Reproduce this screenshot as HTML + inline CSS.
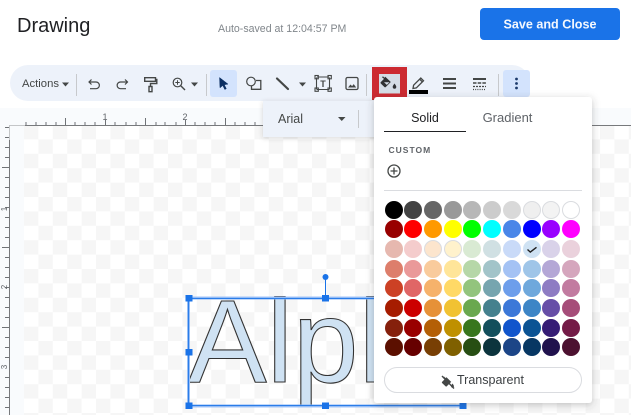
<!DOCTYPE html>
<html><head><meta charset="utf-8"><style>
html,body{margin:0;padding:0;background:#fff}
body{width:631px;height:415px;overflow:hidden;position:relative;font-family:"Liberation Sans",sans-serif}
.a{position:absolute}
</style></head><body>
<svg class="a" style="left:0;top:0" width="631" height="415" viewBox="0 0 631 415">
<defs>
<pattern id="chk" x="24" y="125" width="28.8" height="28.8" patternUnits="userSpaceOnUse">
<rect width="28.8" height="28.8" fill="#fff"/>
<rect width="14.4" height="14.4" fill="#f6f6f6"/>
<rect x="14.4" y="14.4" width="14.4" height="14.4" fill="#f6f6f6"/>
</pattern>
<filter id="sh" x="-15%" y="-15%" width="130%" height="130%"><feDropShadow dx="0" dy="2" stdDeviation="4" flood-color="#3c4043" flood-opacity=".3"/></filter>
<filter id="sh2" x="-15%" y="-30%" width="130%" height="160%"><feDropShadow dx="0" dy="1" stdDeviation="2.5" flood-color="#3c4043" flood-opacity=".22"/></filter>
</defs>

<!-- header -->
<text x="17" y="32" font-size="20" fill="#202124">Drawing</text>
<text x="218" y="32" font-size="10.6" fill="#80868b">Auto-saved at 12:04:57 PM</text>
<rect x="480" y="8" width="140" height="32" rx="4" fill="#1a73e8"/>
<text x="550" y="28.5" font-size="13" font-weight="bold" fill="#f4f8fe" text-anchor="middle" textLength="93" lengthAdjust="spacingAndGlyphs">Save and Close</text>

<!-- canvas -->
<rect x="0" y="108" width="631" height="307" fill="#f9fbfd"/>
<rect x="24" y="125" width="607" height="290" fill="url(#chk)"/>

<!-- rulers -->
<path d="M9 125.5H631M9.5 125V415" stroke="#77797c" stroke-width="1" fill="none"/>
<path d="M9 125.5H25M9.5 125V140" stroke="#c4c6c8" stroke-width="1" fill="none"/>
<g stroke="#6f7276" stroke-width="1" fill="none">
<path d="M26 125V122M36 125V122M46 125V122M56 125V122M75 125V122M85 125V122M95 125V122M115 125V122M126 125V122M136 125V122M156 125V122M165 125V122M176 125V122M195 125V122M205 125V122M215 125V122M235 125V122M245 125V122M255 125V122"/>
<path d="M65.500 125V118M145.500 125V118M225.500 125V118M105.500 125V120M185.500 125V120"/>
<path d="M5 127.500H9M5 137.500H9M5 147.500H9M5 157.500H9M2 167.500H9M5 177.500H9M5 187.500H9M5 197.500H9M5 207.500H9M5 217.500H9M5 227.500H9M5 237.500H9M2 247.500H9M5 257.500H9M5 267.500H9M5 277.500H9M5 287.500H9M5 297.500H9M5 307.500H9M5 317.500H9M2 327.500H9M5 337.500H9M5 347.500H9M5 357.500H9M5 377.500H9M5 387.500H9M5 397.500H9M5 407.500H9"/>
</g>
<text x="105" y="120" font-size="9" fill="#5f6368" text-anchor="middle">1</text>
<text x="185" y="120" font-size="9" fill="#5f6368" text-anchor="middle">2</text>
<text x="4" y="212" font-size="8" fill="#5f6368" text-anchor="middle" transform="rotate(-90 4 209)">1</text>
<text x="4" y="290" font-size="8" fill="#5f6368" text-anchor="middle" transform="rotate(-90 4 287)">2</text>
<text x="4" y="370" font-size="8" fill="#5f6368" text-anchor="middle" transform="rotate(-90 4 367)">3</text>

<!-- word art -->
<text x="188" y="382" font-size="118" fill="#cfe2f3" stroke="#333" stroke-width="1.100">Alph</text>

<!-- selection -->
<path d="M188.500 298H463M188.500 298V406M188.500 406H463" fill="none" stroke="#a4c6f8" stroke-width="3"/>
<path d="M188 298.500H463M188 405.500H463M188.500 298V406" stroke="#2a7de9" stroke-width="1.200" fill="none"/>
<path d="M325.500 277V298" stroke="#1a73e8" stroke-width="1"/>
<circle cx="325.500" cy="277" r="3" fill="#1a73e8"/>
<g fill="#1a73e8">
<rect x="185.500" y="295" width="7" height="6.500"/><rect x="322" y="295" width="7" height="6.500"/>
<rect x="185.500" y="349" width="7" height="6.500"/><rect x="185.500" y="402.500" width="7" height="6.500"/>
<rect x="322" y="402.500" width="7" height="6.500"/><rect x="459.500" y="402.500" width="7" height="6.500"/>
</g>

<!-- toolbar -->
<rect x="10" y="65" width="520" height="36" rx="18" fill="#edf2fa"/>
<text x="22" y="87" font-size="11" fill="#444746" textLength="37" lengthAdjust="spacingAndGlyphs">Actions</text>
<path d="M62 82.500h7l-3.500 4z" fill="#444746"/>
<path d="M76.500 74V96M206.500 74V96M366.500 74V96" stroke="#c7c9cc"/>
<!-- undo -->
<path d="M91.500 79.500l-2.500 2.500 2.500 2.500M89 82h7a3.300 3.300 0 0 1 0 6.700H90" fill="none" stroke="#444746" stroke-width="1.200"/>
<!-- redo -->
<path d="M125 79.500l2.500 2.500-2.500 2.500M127.500 82h-7a3.300 3.300 0 0 0 0 6.700H126" fill="none" stroke="#444746" stroke-width="1.200"/>
<!-- paint format -->
<path d="M144.700 77.700h10.800v3.600h-10.800zM155.500 79.500h1.300v4h-6.300v3M149 86.500h3v5.200h-3z" fill="none" stroke="#444746" stroke-width="1.400"/>
<!-- zoom -->
<circle cx="177.500" cy="82.500" r="4.300" fill="none" stroke="#444746" stroke-width="1.200"/>
<path d="M180.500 85.500l4.500 4.500" stroke="#444746" stroke-width="1.400"/>
<path d="M175.300 82.500h4.400M177.500 80.300v4.400" stroke="#444746" stroke-width="1"/>
<path d="M191 82.500h7l-3.500 4z" fill="#444746"/>
<!-- select -->
<rect x="210" y="70" width="27" height="27" rx="3" fill="#d3e3fd"/>
<path d="M219.500 77.500l8.500 6.600-3.700.6 2 4-1.500.8-2-4-2.800 2.300z" fill="#0b2f63" stroke="#0b2f63" stroke-width=".5"/>
<!-- shape -->
<circle cx="251" cy="81.500" r="4.300" fill="none" stroke="#444746" stroke-width="1.200"/>
<path d="M256 80.500h4.800v8.800h-9.300v-3.300" fill="none" stroke="#444746" stroke-width="1.300"/>
<!-- line -->
<path d="M277 78.500l11 10.500" stroke="#444746" stroke-width="2.200" stroke-linecap="round"/>
<path d="M299 82.500h7l-3.500 4z" fill="#444746"/>
<!-- textbox -->
<g fill="none" stroke="#444746" stroke-width="1.100">
<path d="M317 77h12M317 89.500h12M316.500 77.500v12M329.500 77.500v12"/>
<rect x="315" y="75.500" width="3.300" height="3.300"/><rect x="328" y="75.500" width="3.300" height="3.300"/>
<rect x="315" y="88" width="3.300" height="3.300"/><rect x="328" y="88" width="3.300" height="3.300"/>
</g>
<text x="323" y="87" font-size="9" font-weight="bold" fill="#444746" text-anchor="middle">T</text>
<!-- image -->
<rect x="346" y="77.500" width="12" height="12" rx="1.500" fill="none" stroke="#444746" stroke-width="1.300"/>
<path d="M348 87.500l2.500-3 1.600 1.600 1.600-2 2.500 3.400z" fill="#444746"/>

<!-- fill highlighted -->
<rect x="372" y="67" width="35" height="33" fill="#cc2a31"/>
<rect x="379" y="74" width="21" height="19.500" fill="#d5dde6"/>
<path d="M383 76.200l-1 1 2 1.700-3.200 3.200a1 1 0 0 0 0 1.400l3.600 3.500a1 1 0 0 0 1.400 0l5-5-5.500-5.300-1 1z" fill="#2f3133"/>
<path d="M384 82.200h5.500l-2.700 2.700z" fill="#d5dde6"/>
<path d="M394.500 83.500c-1 1.400-1.800 2.500-1.800 3.400a1.800 1.800 0 0 0 3.600 0c0-.9-.8-2-1.800-3.400z" fill="#2f3133"/>
<!-- pen -->
<path d="M413 88.500l.6-3.300 7.200-7.200 2.700 2.700-7.200 7.200z" fill="none" stroke="#444746" stroke-width="1.300"/>
<path d="M419.500 79l3 3" stroke="#444746" stroke-width="1.300"/>
<rect x="409" y="90" width="19" height="4" fill="#000"/>
<!-- line weight -->
<path d="M443 79h13M443 83.500h13M443 88h13" stroke="#444746" stroke-width="2"/>
<!-- dash -->
<path d="M473 79h13" stroke="#444746" stroke-width="2"/>
<path d="M473 83h13" stroke="#444746" stroke-width="1.500" stroke-dasharray="3.500 1.200"/>
<path d="M473 86.500h13" stroke="#444746" stroke-width="1.300" stroke-dasharray="2 1"/>
<path d="M473 89.500h13" stroke="#444746" stroke-width="1.200" stroke-dasharray="1 1.200"/>
<path d="M498.500 74V96" stroke="#c7c9cc"/>
<!-- more -->
<rect x="503" y="70" width="27" height="27" rx="3" fill="#d3e3fd"/>
<circle cx="516.500" cy="79" r="1.400" fill="#1c3a6b"/><circle cx="516.500" cy="83.500" r="1.400" fill="#1c3a6b"/><circle cx="516.500" cy="88" r="1.400" fill="#1c3a6b"/>

<!-- font panel -->
<rect x="263" y="101" width="115" height="36" fill="#edf2fa" filter="url(#sh2)"/>
<text x="278" y="123" font-size="12.500" fill="#444746">Arial</text>
<path d="M338 117h7.500l-3.750 4z" fill="#444746"/>
<path d="M358.500 110V128" stroke="#c7c9cc"/>

<!-- popup -->
<rect x="374" y="97" width="218" height="306" rx="3" fill="#fff" filter="url(#sh)"/>
<text x="425" y="122" font-size="12.500" fill="#202124" text-anchor="middle">Solid</text>
<text x="507.500" y="122" font-size="13" fill="#5f6368" text-anchor="middle">Gradient</text>
<rect x="384" y="131" width="82" height="1" fill="#202124"/>
<text x="388.500" y="153" font-size="8.500" font-weight="bold" fill="#5f6368" letter-spacing="1">CUSTOM</text>
<circle cx="394" cy="171" r="6" fill="none" stroke="#444746" stroke-width="1.300"/>
<path d="M394 167.500v7M390.500 171h7" stroke="#444746" stroke-width="1.300"/>
<rect x="384" y="190" width="198" height="1" fill="#dadce0"/>

<!-- swatches -->
<g stroke="none">
<g><circle cx="394" cy="210" r="9" fill="#000"/><circle cx="413" cy="210" r="9" fill="#434343"/><circle cx="433" cy="210" r="9" fill="#666"/><circle cx="453" cy="210" r="9" fill="#999"/><circle cx="472" cy="210" r="9" fill="#b7b7b7"/><circle cx="492" cy="210" r="9" fill="#ccc"/><circle cx="512" cy="210" r="9" fill="#d9d9d9"/><circle cx="532" cy="210" r="8.500" fill="#efefef" stroke="#dadce0"/><circle cx="551" cy="210" r="8.500" fill="#f3f3f3" stroke="#dadce0"/><circle cx="571" cy="210" r="8.500" fill="#fff" stroke="#dadce0"/></g>
<g><circle cx="394" cy="229" r="9" fill="#980000"/><circle cx="413" cy="229" r="9" fill="#f00"/><circle cx="433" cy="229" r="9" fill="#f90"/><circle cx="453" cy="229" r="9" fill="#ff0"/><circle cx="472" cy="229" r="9" fill="#0f0"/><circle cx="492" cy="229" r="9" fill="#0ff"/><circle cx="512" cy="229" r="9" fill="#4a86e8"/><circle cx="532" cy="229" r="9" fill="#00f"/><circle cx="551" cy="229" r="9" fill="#90f"/><circle cx="571" cy="229" r="9" fill="#f0f"/></g>
<g><circle cx="394" cy="249" r="9" fill="#e6b8af"/><circle cx="413" cy="249" r="9" fill="#f4cccc"/><circle cx="433" cy="249" r="8.500" fill="#fce5cd" stroke="#dadce0"/><circle cx="453" cy="249" r="8.500" fill="#fff2cc" stroke="#dadce0"/><circle cx="472" cy="249" r="9" fill="#d9ead3"/><circle cx="492" cy="249" r="9" fill="#d0e0e3"/><circle cx="512" cy="249" r="9" fill="#c9daf8"/><circle cx="532" cy="249" r="9" fill="#cfe2f3"/><circle cx="551" cy="249" r="9" fill="#d9d2e9"/><circle cx="571" cy="249" r="9" fill="#ead1dc"/></g>
<g><circle cx="394" cy="269" r="9" fill="#dd7e6b"/><circle cx="413" cy="269" r="9" fill="#ea9999"/><circle cx="433" cy="269" r="9" fill="#f9cb9c"/><circle cx="453" cy="269" r="9" fill="#ffe599"/><circle cx="472" cy="269" r="9" fill="#b6d7a8"/><circle cx="492" cy="269" r="9" fill="#a2c4c9"/><circle cx="512" cy="269" r="9" fill="#a4c2f4"/><circle cx="532" cy="269" r="9" fill="#9fc5e8"/><circle cx="551" cy="269" r="9" fill="#b4a7d6"/><circle cx="571" cy="269" r="9" fill="#d5a6bd"/></g>
<g><circle cx="394" cy="288" r="9" fill="#cc4125"/><circle cx="413" cy="288" r="9" fill="#e06666"/><circle cx="433" cy="288" r="9" fill="#f6b26b"/><circle cx="453" cy="288" r="9" fill="#ffd966"/><circle cx="472" cy="288" r="9" fill="#93c47d"/><circle cx="492" cy="288" r="9" fill="#76a5af"/><circle cx="512" cy="288" r="9" fill="#6d9eeb"/><circle cx="532" cy="288" r="9" fill="#6fa8dc"/><circle cx="551" cy="288" r="9" fill="#8e7cc3"/><circle cx="571" cy="288" r="9" fill="#c27ba0"/></g>
<g><circle cx="394" cy="308" r="9" fill="#a61c00"/><circle cx="413" cy="308" r="9" fill="#c00"/><circle cx="433" cy="308" r="9" fill="#e69138"/><circle cx="453" cy="308" r="9" fill="#f1c232"/><circle cx="472" cy="308" r="9" fill="#6aa84f"/><circle cx="492" cy="308" r="9" fill="#45818e"/><circle cx="512" cy="308" r="9" fill="#3c78d8"/><circle cx="532" cy="308" r="9" fill="#3d85c6"/><circle cx="551" cy="308" r="9" fill="#674ea7"/><circle cx="571" cy="308" r="9" fill="#a64d79"/></g>
<g><circle cx="394" cy="328" r="9" fill="#85200c"/><circle cx="413" cy="328" r="9" fill="#900"/><circle cx="433" cy="328" r="9" fill="#b45f06"/><circle cx="453" cy="328" r="9" fill="#bf9000"/><circle cx="472" cy="328" r="9" fill="#38761d"/><circle cx="492" cy="328" r="9" fill="#134f5c"/><circle cx="512" cy="328" r="9" fill="#1155cc"/><circle cx="532" cy="328" r="9" fill="#0b5394"/><circle cx="551" cy="328" r="9" fill="#351c75"/><circle cx="571" cy="328" r="9" fill="#741b47"/></g>
<g><circle cx="394" cy="347" r="9" fill="#5b0f00"/><circle cx="413" cy="347" r="9" fill="#600"/><circle cx="433" cy="347" r="9" fill="#783f04"/><circle cx="453" cy="347" r="9" fill="#7f6000"/><circle cx="472" cy="347" r="9" fill="#274e13"/><circle cx="492" cy="347" r="9" fill="#0c343d"/><circle cx="512" cy="347" r="9" fill="#1c4587"/><circle cx="532" cy="347" r="9" fill="#073763"/><circle cx="551" cy="347" r="9" fill="#20124d"/><circle cx="571" cy="347" r="9" fill="#4c1130"/></g>
</g>
<path d="M527.500 249.500l2.800 2.600 6.200-4.800" fill="none" stroke="#1f1f1f" stroke-width="1.400"/>

<!-- transparent -->
<rect x="384.500" y="367.500" width="197" height="25" rx="12.500" fill="#fff" stroke="#dadce0"/>
<path d="M444 376.500l-1 1 1.800 1.600-2.600 2.700a.9.900 0 0 0 0 1.300l3.300 3.200a.9.900 0 0 0 1.300 0l4.400-4.400-4.700-4.700-1 .8z" fill="#444746"/>
<path d="M452.500 383.500c-.9 1.200-1.400 2-1.400 2.800a1.400 1.400 0 0 0 2.800 0c0-.8-.5-1.600-1.400-2.800z" fill="#444746"/>
<path d="M442 376l12 12.500" stroke="#444746" stroke-width="1.400"/>
<text x="457" y="384" font-size="12.500" fill="#3c4043">Transparent</text>
</svg>
</body></html>
